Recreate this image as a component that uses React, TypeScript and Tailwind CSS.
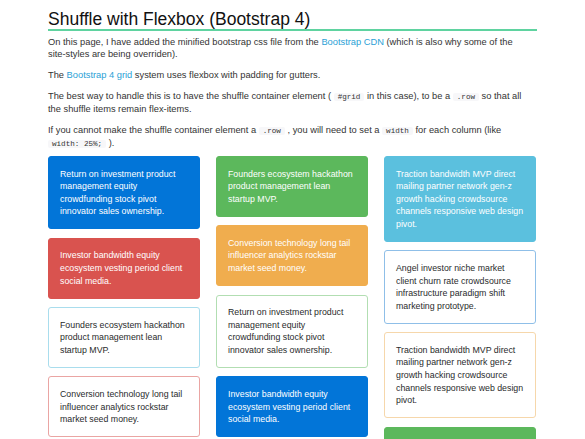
import React from 'react';

type Card = {
  text: string;
  variant: 'primary' | 'success' | 'danger' | 'warning' | 'info' | 'o-info' | 'o-danger' | 'o-success' | 'o-primary' | 'o-warning';
};

const styles: Record<Card['variant'], string> = {
  primary: 'bg-[#0275d8] border-[#0275d8] text-white',
  success: 'bg-[#5cb85c] border-[#5cb85c] text-white',
  danger: 'bg-[#d9534f] border-[#d9534f] text-white',
  warning: 'bg-[#f0ad4e] border-[#f0ad4e] text-white',
  info: 'bg-[#5bc0de] border-[#5bc0de] text-white',
  'o-info': 'bg-white border-[#a9dded] text-[#292b2c]',
  'o-danger': 'bg-white border-[#eaa5a3] text-[#292b2c]',
  'o-success': 'bg-white border-[#b2deb2] text-[#292b2c]',
  'o-primary': 'bg-white border-[#8fbfe8] text-[#292b2c]',
  'o-warning': 'bg-white border-[#f6d7ab] text-[#292b2c]',
};

const ROI = 'Return on investment product management equity crowdfunding stock pivot innovator sales ownership.';
const FOUNDERS = 'Founders ecosystem hackathon product management lean startup MVP.';
const TRACTION = 'Traction bandwidth MVP direct mailing partner network gen-z growth hacking crowdsource channels responsive web design pivot.';
const INVESTOR = 'Investor bandwidth equity ecosystem vesting period client social media.';
const CONVERSION = 'Conversion technology long tail influencer analytics rockstar market seed money.';
const ANGEL = 'Angel investor niche market client churn rate crowdsource infrastructure paradigm shift marketing prototype.';

const columns: Card[][] = [
  [
    { text: ROI, variant: 'primary' },
    { text: INVESTOR, variant: 'danger' },
    { text: FOUNDERS, variant: 'o-info' },
    { text: CONVERSION, variant: 'o-danger' },
  ],
  [
    { text: FOUNDERS, variant: 'success' },
    { text: CONVERSION, variant: 'warning' },
    { text: ROI, variant: 'o-success' },
    { text: INVESTOR, variant: 'primary' },
  ],
  [
    { text: TRACTION, variant: 'info' },
    { text: ANGEL, variant: 'o-primary' },
    { text: TRACTION, variant: 'o-warning' },
    { text: FOUNDERS, variant: 'success' },
  ],
];

function Code({ children }: { children: React.ReactNode }) {
  return (
    <code className="bg-[#f7f7f9] text-[#333] px-[4px] rounded-[2px] text-[7.6px] font-['Liberation_Mono',monospace]">
      {children}
    </code>
  );
}

function Link({ children }: { children: React.ReactNode }) {
  return <a className="text-[#2a9fd6]">{children}</a>;
}

export default function App() {
  return (
    <div className="h-[439px] overflow-hidden bg-white font-['Liberation_Sans',Arial,sans-serif] text-[#333]">
      <div className="w-[489px] ml-[48px] pt-[10px]">
        {/* Title */}
        <h1 className="text-[17.5px] leading-[19px] text-[#111] border-b-2 border-[#5fd3a0]">
          Shuffle with Flexbox (Bootstrap 4)
        </h1>

        {/* Intro */}
        <div className="text-[9.3px] leading-[12px] mt-[5px] pr-[10px] space-y-[9px]">
          <p>
            On this page, I have added the minified bootstrap css file from the <Link>Bootstrap CDN</Link> (which is also why some of the site-styles are being overriden).
          </p>
          <p>
            The <Link>Bootstrap 4 grid</Link> system uses flexbox with padding for gutters.
          </p>
          <p>
            The best way to handle this is to have the shuffle container element ( <Code>#grid</Code> in this case), to be a <Code>.row</Code> so that all the shuffle items remain flex-items.
          </p>
          <p>
            If you cannot make the shuffle container element a <Code>.row</Code> , you will need to set a <Code>width</Code> for each column (like <Code>width: 25%;</Code> ).
          </p>
        </div>

        {/* Grid */}
        <div className="flex gap-[16px] mt-[6px]">
          {columns.map((col, i) => (
            <div key={i} className="w-[152px] flex flex-col gap-[8.5px]">
              {col.map((card, j) => (
                <div
                  key={j}
                  className={`border rounded-[3px] px-[11px] py-[10.5px] text-[8.8px] leading-[12.6px] ${styles[card.variant]}`}
                >
                  {card.text}
                </div>
              ))}
            </div>
          ))}
        </div>
      </div>
    </div>
  );
}
